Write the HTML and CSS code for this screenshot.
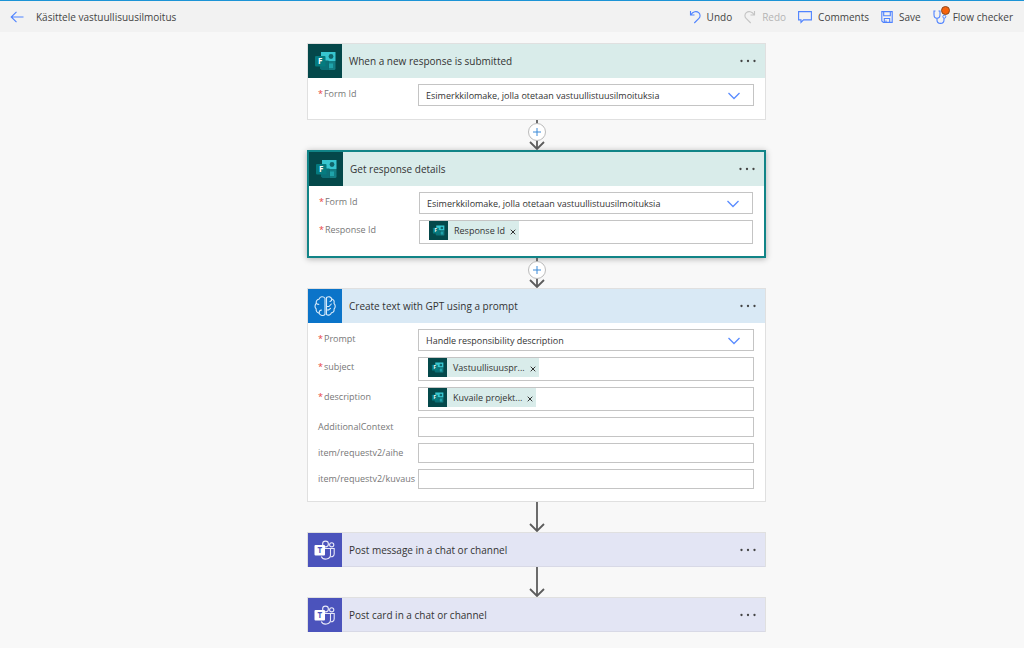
FILE: index.html
```html
<!DOCTYPE html>
<html lang="en">
<head>
<meta charset="utf-8">
<meta name="viewport" content="width=device-width, initial-scale=1">
<title>Käsittele vastuullisuusilmoitus</title>
<link rel="stylesheet" href="styles.css">
</head>
<body>
<svg class="sprite" aria-hidden="true">
  <symbol id="forms" viewBox="0 0 34 34">
    <path fill="#37c6d0" d="M13 8h14.500v9H13z"/>
    <path fill="#0b7077" d="M12 16.500h8.500V26H13.500L12 24.500z"/>
    <path fill="#137e84" d="M20.500 17h7v7.500a1.500 1.500 0 0 1-1.500 1.500h-5.500z"/>
    <circle cx="23" cy="12.500" r="2.400" fill="#10676c"/>
    <path fill="#1fa3aa" d="M21 19.500h4V24h-4z"/>
    <rect x="7" y="12" width="10.500" height="10.500" rx="1" fill="#057b7f"/>
    <text x="12.200" y="20.200" text-anchor="middle" class="logo-letter" fill="#fff">F</text>
  </symbol>
  <symbol id="brain" viewBox="0 0 34 34">
    <g fill="none" stroke="#d9ebfa" stroke-width="1.100" stroke-linejoin="round" stroke-linecap="round">
      <path d="M17 9.200C15.500 7 11.800 7.200 11.300 10 9 10.300 7.800 12.300 8.300 14.300c-1.700 1.600-1.700 4.200-.1 5.600-.4 2.300.9 4 2.900 4.200.8 2.500 4.400 3.300 5.900 1.300z"/>
      <path d="M18.500 24.500V8.500c2-1.500 4.700-.7 5.300 1.500 2 .4 2.800 2.300 2.200 4.300 1.600 1.600 1.600 4.200.1 5.600.3 2.300-.9 3.700-2.700 4-.7 2-3 2.900-4.900 1.600"/>
      <path d="M8.300 14.300c.6.900 1.500 1.200 2.500 1M11.100 24c0-1.800.9-2.800 2.400-3M18.500 17.500H21l2.300-2.500M18.500 21h2l2-1.700M23.800 10c.1 1.200-.6 2.100-1.800 2.500"/>
    </g>
  </symbol>
  <symbol id="teams" viewBox="0 0 34 34">
    <g fill="none" stroke="#e8e9f8" stroke-width="1.100">
      <circle cx="17.500" cy="11" r="2.900"/>
      <circle cx="23.700" cy="11.800" r="2.100"/>
      <path d="M17 15.500h5.500v6.300c0 5-7.500 5.700-9.200 1.700"/>
      <path d="M22.500 15.500h3.700v5.200c0 2.300-1.800 3.500-3.900 3"/>
    </g>
    <rect x="6.500" y="12" width="10.500" height="10.500" rx="1" fill="#fff"/>
    <text x="11.800" y="20.200" text-anchor="middle" class="logo-letter" fill="#4b53bc">T</text>
  </symbol>
  <symbol id="chevron" viewBox="0 0 14 8">
    <path d="M1.500 1l5.500 5.500L12.500 1" fill="none" stroke="#5a8cff" stroke-width="1.300"/>
  </symbol>
  <symbol id="dots" viewBox="0 0 18 4">
    <g fill="#444"><circle cx="2.500" cy="2" r="1.150"/><circle cx="9" cy="2" r="1.150"/><circle cx="15.500" cy="2" r="1.150"/></g>
  </symbol>
  <symbol id="close" viewBox="0 0 6 6">
    <path d="M.7.700l4.600 4.600M5.300.700L.7 5.300" stroke="#333" stroke-width="1" fill="none"/>
  </symbol>
  <symbol id="arrow" viewBox="0 0 18 30">
    <path d="M9 0v29M2 22l7 7 7-7" fill="none" stroke="#5c5c5c" stroke-width="1.800"/>
  </symbol>
  <symbol id="plus" viewBox="0 0 8 8">
    <path d="M4 0v8M0 4h8" stroke="#3a8ad8" stroke-width="1" fill="none"/>
  </symbol>
</svg>

<header class="toolbar">
  <button class="tool" type="button" aria-label="Back">
    <svg class="back-icon" viewBox="0 0 14 12"><path d="M13.500 6H1.500M6.500 .8L1.200 6l5.300 5.200" fill="none" stroke="#4f83ff" stroke-width="1.100"/></svg>
  </button>
  <h1 class="flow-name">Käsittele vastuullisuusilmoitus</h1>
  <nav class="tools" aria-label="Flow actions">
    <button class="tool" type="button">
      <svg class="icon" viewBox="0 0 12 14"><path d="M1.500 1v4h4M1.800 4.800C4 1.500 7.500.800 9.700 2.700c2 1.900 1.600 4.300.2 5.700L5.300 13" fill="none" stroke="#4f83ff" stroke-width="1.100"/></svg>
      <span>Undo</span>
    </button>
    <button class="tool" type="button" disabled>
      <svg class="icon" viewBox="0 0 12 14"><path d="M10.500 1v4h-4M10.200 4.800C8 1.500 4.500.800 2.300 2.700.3 4.600.7 7 2.100 8.400L6.700 13" fill="none" stroke="#c4c4c4" stroke-width="1.100"/></svg>
      <span>Redo</span>
    </button>
    <button class="tool" type="button">
      <svg class="icon icon-wide" viewBox="0 0 14 14"><path d="M.6 1.600h12.800v8.300H5.500L3 12.500V9.900H.6z" fill="none" stroke="#4f83ff" stroke-width="1.100"/></svg>
      <span>Comments</span>
    </button>
    <button class="tool" type="button">
      <svg class="icon" viewBox="0 0 12 14"><path d="M.8 1.600h10.400v10.800H2.300L.8 11zM2.700 1.600v4.200h6.600V1.600M3.300 12.400V8.500h5.400v3.900M5 12.400v-2" fill="none" stroke="#4f83ff" stroke-width="1.100"/></svg>
      <span>Save</span>
    </button>
    <button class="tool" type="button">
      <svg class="icon icon-wide" viewBox="0 0 14 14"><path d="M2.500 1H1v3.500C1 7 2.300 8.300 4 8.300S7 7 7 4.500V1H5.500M4 8.300v1.700c0 4.500 7 4.500 7 0V8.200" fill="none" stroke="#4f83ff" stroke-width="1.100"/><circle cx="11.300" cy="6.700" r="1.500" fill="none" stroke="#4f83ff"/></svg>
      <span class="alert-dot"></span>
      <span>Flow checker</span>
    </button>
  </nav>
</header>

<main class="canvas">
  <section class="card">
    <div class="card-head forms">
      <svg class="card-icon"><use href="#forms"/></svg>
      <h2 class="card-title">When a new response is submitted</h2>
      <button class="more" type="button" aria-label="More"><svg class="dots"><use href="#dots"/></svg></button>
    </div>
    <div class="fields">
      <label class="label required" for="form-a">Form Id</label>
      <div class="picker">
        <select class="select" id="form-a"><option>Esimerkkilomake, jolla otetaan vastuullistuusilmoituksia</option></select>
        <svg class="chevron"><use href="#chevron"/></svg>
      </div>
    </div>
  </section>

  <div class="link">
    <svg class="arrow"><use href="#arrow"/></svg>
    <button class="add" type="button" aria-label="Insert step"><svg class="plus"><use href="#plus"/></svg></button>
  </div>

  <section class="card selected">
    <div class="card-head forms">
      <svg class="card-icon"><use href="#forms"/></svg>
      <h2 class="card-title">Get response details</h2>
      <button class="more" type="button" aria-label="More"><svg class="dots"><use href="#dots"/></svg></button>
    </div>
    <div class="fields with-tokens">
      <label class="label required" for="form-b">Form Id</label>
      <div class="picker">
        <select class="select" id="form-b"><option>Esimerkkilomake, jolla otetaan vastuullistuusilmoituksia</option></select>
        <svg class="chevron"><use href="#chevron"/></svg>
      </div>
      <label class="label required" for="response">Response Id</label>
      <div class="token-box">
        <span class="token"><svg class="token-icon"><use href="#forms"/></svg><span class="token-text">Response Id</span><button class="remove" type="button" aria-label="Remove"><svg class="close"><use href="#close"/></svg></button></span>
        <input class="token-input" id="response" type="text">
      </div>
    </div>
  </section>

  <div class="link">
    <svg class="arrow"><use href="#arrow"/></svg>
    <button class="add" type="button" aria-label="Insert step"><svg class="plus"><use href="#plus"/></svg></button>
  </div>

  <section class="card">
    <div class="card-head gpt">
      <svg class="card-icon"><use href="#brain"/></svg>
      <h2 class="card-title">Create text with GPT using a prompt</h2>
      <button class="more" type="button" aria-label="More"><svg class="dots"><use href="#dots"/></svg></button>
    </div>
    <div class="fields with-tokens">
      <label class="label required" for="prompt">Prompt</label>
      <div class="picker">
        <select class="select" id="prompt"><option>Handle responsibility description</option></select>
        <svg class="chevron"><use href="#chevron"/></svg>
      </div>
      <label class="label required" for="subject">subject</label>
      <div class="token-box">
        <span class="token"><svg class="token-icon"><use href="#forms"/></svg><span class="token-text">Vastuullisuuspr...</span><button class="remove" type="button" aria-label="Remove"><svg class="close"><use href="#close"/></svg></button></span>
        <input class="token-input" id="subject" type="text">
      </div>
      <label class="label required" for="description">description</label>
      <div class="token-box">
        <span class="token"><svg class="token-icon"><use href="#forms"/></svg><span class="token-text">Kuvaile projekt...</span><button class="remove" type="button" aria-label="Remove"><svg class="close"><use href="#close"/></svg></button></span>
        <input class="token-input" id="description" type="text">
      </div>
      <label class="label" for="context">AdditionalContext</label>
      <input class="text" id="context" type="text">
      <label class="label" for="aihe">item/requestv2/aihe</label>
      <input class="text" id="aihe" type="text">
      <label class="label" for="kuvaus">item/requestv2/kuvaus</label>
      <input class="text" id="kuvaus" type="text">
    </div>
  </section>

  <div class="link"><svg class="arrow"><use href="#arrow"/></svg></div>

  <section class="card collapsed">
    <div class="card-head teams">
      <svg class="card-icon"><use href="#teams"/></svg>
      <h2 class="card-title">Post message in a chat or channel</h2>
      <button class="more" type="button" aria-label="More"><svg class="dots"><use href="#dots"/></svg></button>
    </div>
  </section>

  <div class="link"><svg class="arrow"><use href="#arrow"/></svg></div>

  <section class="card collapsed">
    <div class="card-head teams">
      <svg class="card-icon"><use href="#teams"/></svg>
      <h2 class="card-title">Post card in a chat or channel</h2>
      <button class="more" type="button" aria-label="More"><svg class="dots"><use href="#dots"/></svg></button>
    </div>
  </section>
</main>
</body>
</html>
```

FILE: styles.css
```css
* { box-sizing: border-box; }

body {
  margin: 0;
  background: #f8f8f8;
  color: #333;
  font-family: "Open Sans", "Noto Sans", sans-serif;
  font-size: 9px;
}

button, input, select { font: inherit; color: inherit; }
button { padding: 0; border: 0; background: none; }
svg { display: block; flex: none; }
.sprite { display: none; }
.logo-letter { font-family: "Open Sans", sans-serif; font-size: 8px; font-weight: 700; }

/* Toolbar */
.toolbar {
  display: flex;
  align-items: center;
  height: 32px;
  padding: 0 11px 0 10px;
  border-top: 1px solid #1c94d6;
  background: #f2f2f2;
  color: #444;
  font-size: 10px;
}
.back-icon { width: 14px; height: 12px; }
.flow-name { margin: 0 auto 0 12px; font-size: 10px; font-weight: 400; }
.tools { display: flex; gap: 12px; }
.tool { display: flex; align-items: center; gap: 6px; position: relative; }
.tool:disabled { color: #b5b5b5; }
.icon { width: 12px; height: 14px; }
.icon-wide { width: 14px; }
.alert-dot {
  position: absolute;
  top: -4px;
  left: 8px;
  width: 9px;
  height: 9px;
  border: 1px solid #8a4a20;
  border-radius: 50%;
  background: #f7630c;
}

/* Canvas */
.canvas {
  display: flex;
  flex-direction: column;
  align-items: center;
  padding: 11px 0 16px 49px;
}
.card {
  width: 100%;
  max-width: 459px;
  border: 1px solid #e0e0e0;
  background: #fff;
}
.card.selected {
  border: 2px solid #118487;
  box-shadow: 0 1px 6px rgba(0, 0, 0, 0.3);
}
.card.collapsed { border-bottom: 0; }
.card-head { display: flex; align-items: center; height: 34px; }
.card-icon { width: 34px; height: 34px; }
.card-title { flex: 1; margin: 0 0 0 7px; font-size: 10px; font-weight: 400; }
.more { padding: 8px; }
.dots { width: 18px; height: 4px; }

.forms { background: #d9ecea; }
.forms .card-icon, .token-icon { background: #04484a; }
.gpt { background: #d9e9f5; }
.gpt .card-icon { background: #0b74c9; }
.teams { background: #e3e5f4; box-shadow: inset 0 -1px #d8d9e6; }
.teams .card-icon { background: #4b53bc; }

/* Fields */
.fields {
  display: grid;
  grid-template-columns: 100px 1fr;
  gap: 6px 0;
  padding: 6px 11px 13px 10px;
}
.fields.with-tokens { padding-bottom: 12px; }
.label { color: #777; line-height: 20px; white-space: nowrap; }
.required::before { content: "*"; margin-right: 1px; color: #e8433c; }
.picker, .token-box, .text { border: 1px solid #c4c4c4; background: #fff; }
.picker { display: grid; align-items: center; height: 22px; }
.select {
  grid-area: 1 / 1;
  width: 100%;
  height: 20px;
  padding: 0 36px 0 7px;
  border: 0;
  background: none;
  appearance: none;
}
.chevron {
  grid-area: 1 / 1;
  justify-self: end;
  width: 14px;
  height: 8px;
  margin: 2px 12px 0 0;
  pointer-events: none;
}
.token-box { display: flex; height: 24px; padding-left: 9px; }
.token {
  display: flex;
  align-items: center;
  height: 19px;
  padding-right: 3px;
  background: #d9ecea;
}
.token-icon { width: 19px; height: 19px; }
.token-text { margin: 0 5px 0 6px; }
.close { width: 6px; height: 6px; margin-top: 2px; }
.token-input { flex: 1; min-width: 0; padding: 0 4px; border: 0; background: none; }
.text { width: 100%; height: 20px; padding: 0 8px; }

/* Connectors */
.link { position: relative; display: flex; justify-content: center; height: 30px; }
.arrow { width: 18px; height: 30px; }
.add {
  position: absolute;
  top: 3px;
  display: grid;
  place-items: center;
  width: 18px;
  height: 18px;
  border: 1px solid #bbb;
  border-radius: 50%;
  background: #fff;
}
.plus { width: 8px; height: 8px; }
```
